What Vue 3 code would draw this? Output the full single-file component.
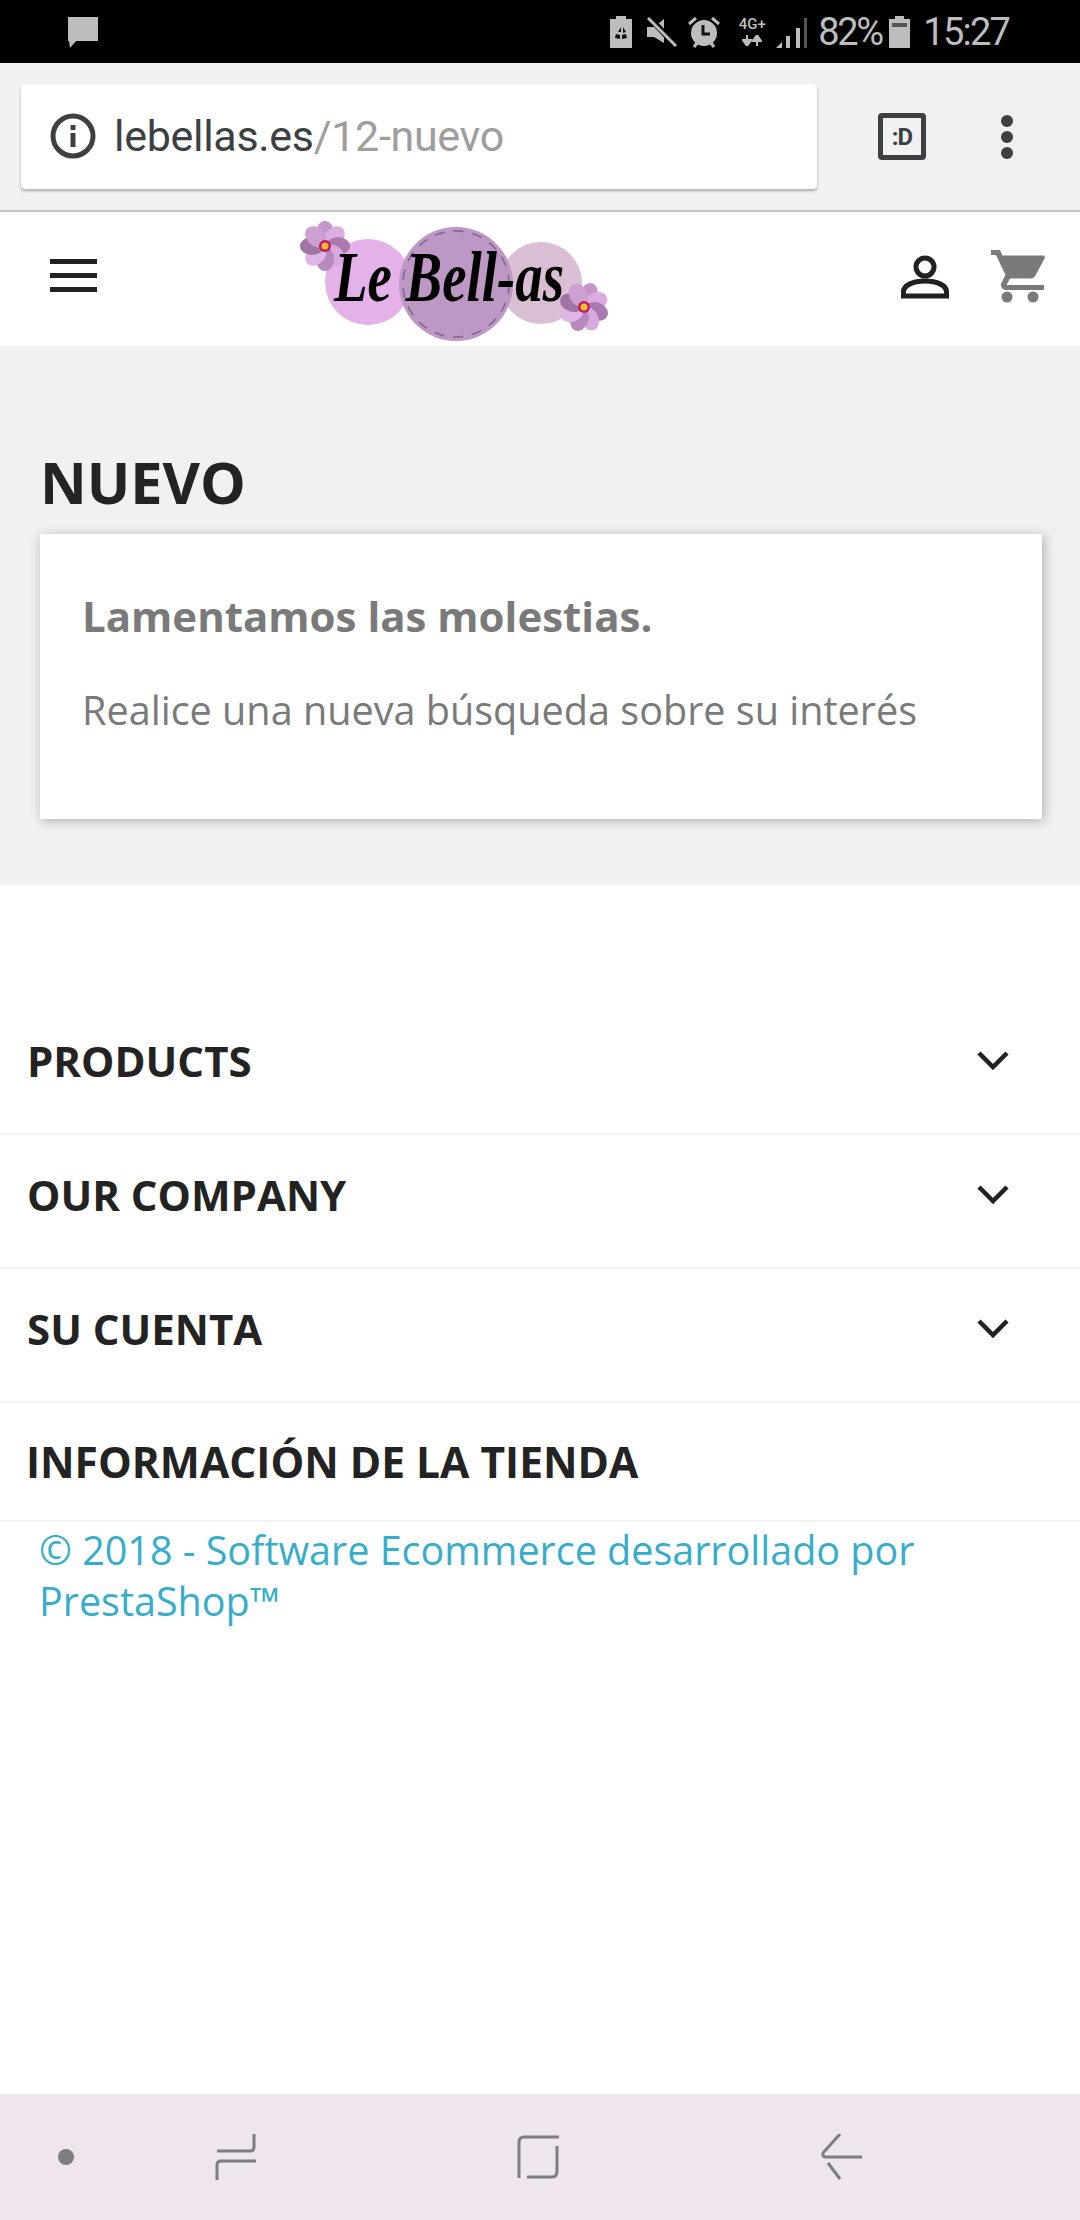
<template>
  <div class="page">
    <div class="status">
      <svg class="msg" width="32" height="32" viewBox="0 0 32 32"><path d="M1 1h30v24H9l-6 7-1-7H1z" fill="#bdbdbd"/></svg>
      <div class="status-right">
        <svg class="ic" width="22" height="32" viewBox="0 0 22 32"><path d="M6 0h10v3h6v29H0V3h6z" fill="#bdbdbd"/><path d="M11 11l-3 5 3 0zM13 11l3 5-3 1zM6 18l-1 4 5 1v-4zM16 18l1 4-5 1v-4z" fill="#111"/></svg>
        <svg class="ic gap-mute" width="30" height="30" viewBox="0 0 30 30"><path d="M0 10h7l10-8v24l-10-6H0z" fill="#bdbdbd"/><path d="M2 0l27 29" stroke="#000" stroke-width="6"/><path d="M1 1l28 28" stroke="#bdbdbd" stroke-width="3"/></svg>
        <svg class="ic gap-alarm" width="32" height="32" viewBox="0 0 32 32"><circle cx="16" cy="17" r="13" fill="#bdbdbd"/><path d="M1 8l7-6M31 8l-7-6M6 31l3-4M26 31l-3-4" stroke="#bdbdbd" stroke-width="3"/><path d="M15 9v9h7" stroke="#111" stroke-width="3" fill="none"/></svg>
        <div class="net">
          <span>4G+</span>
          <svg width="20" height="11" viewBox="0 0 20 11"><path d="M5 0v6M1 5l4 6 4-6zM15 11V5M11 6l4-6 4 6z" stroke="#bdbdbd" stroke-width="2" fill="#bdbdbd"/></svg>
        </div>
        <svg class="ic gap-signal" width="32" height="32" viewBox="0 0 32 32"><path d="M0 32l6-6v6z" fill="#bdbdbd"/><path d="M10 32V20h4v12zM20 32V12h4v20z" fill="#bdbdbd"/><path d="M28 32V2h3v30z" fill="#555"/></svg>
        <span class="st-text pct">82%</span>
        <svg class="ic gap-bat" width="21" height="32" viewBox="0 0 21 32"><path d="M6 0h9v3h6v29H0V3h6z" fill="#bdbdbd"/><rect x="3" y="7" width="15" height="4" fill="#555"/></svg>
        <span class="st-text time">15:27</span>
      </div>
    </div>

    <div class="toolbar">
      <div class="urlbox">
        <svg class="info" width="46" height="46" viewBox="0 0 46 46"><circle cx="23" cy="23" r="20" fill="none" stroke="#3c4043" stroke-width="5"/><rect x="20.500" y="20" width="5" height="14" fill="#3c4043"/><rect x="20.500" y="12" width="5" height="5" fill="#3c4043"/></svg>
        <span class="url"><span class="dom">lebellas.es</span><span class="path">/12-nuevo</span></span>
      </div>
      <div class="tab"><span>:D</span></div>
      <div class="dots"><i></i><i></i><i></i></div>
    </div>

    <header class="head">
      <div class="burger"><i></i><i></i><i></i></div>
      <svg class="logo" width="350" height="130" viewBox="0 0 350 130">
        <circle cx="77" cy="69" r="43" fill="#e4b1e8"/>
        <circle cx="250" cy="70" r="41" fill="#dabed4"/>
        <circle cx="165" cy="71" r="57" fill="#bd98c5"/>
        <circle cx="165" cy="71" r="53" fill="none" stroke="#7f6487" stroke-width="1.500" stroke-dasharray="10 9"/>
        <g transform="translate(34 33)">
          <ellipse v-for="(a, i) in petals" :key="a" cx="0" cy="-13" rx="9" ry="12" :transform="`rotate(${a})`" :fill="petalColors[i]"/>
          <circle r="6" fill="#c2186b"/><circle r="3.500" fill="#f0c020"/>
        </g>
        <text x="43" y="88" class="logotext" textLength="230" lengthAdjust="spacingAndGlyphs">Le Bell-as</text>
        <g transform="translate(293 94)">
          <ellipse v-for="(a, i) in petals" :key="a" cx="0" cy="-13" rx="9" ry="12" :transform="`rotate(${a + 20})`" :fill="petalColors[i]"/>
          <circle r="6" fill="#c2186b"/><circle r="3.500" fill="#f0c020"/>
        </g>
      </svg>
      <svg class="person" width="48" height="44" viewBox="0 0 48 44"><circle cx="24" cy="12" r="9" fill="none" stroke="#212121" stroke-width="5"/><path d="M2.500 41v-4c0-7 10-11 21.500-11s21.500 4 21.500 11v4z" fill="none" stroke="#212121" stroke-width="5"/></svg>
      <svg class="cart" width="54" height="54" viewBox="0 0 54 54"><path d="M0 0h9l2.500 5.500H53l1 2-9.500 18c-1 2-3 3-5 3H19l-3 5.500v1h37v5H15c-3 0-5-2.500-5-5 0-1 .3-2 .7-2.700L14.500 25 5 5H0z" fill="#7a7a7a"/><circle cx="16" cy="47" r="5.500" fill="#7a7a7a"/><circle cx="42" cy="47" r="5.500" fill="#7a7a7a"/></svg>
    </header>

    <main class="main">
      <h1>NUEVO</h1>
      <section class="card">
        <h2>Lamentamos las molestias.</h2>
        <p>Realice una nueva búsqueda sobre su interés</p>
      </section>
    </main>

    <footer class="foot">
      <div v-for="r in rows" :key="r" class="row">
        <span>{{ r }}</span>
        <svg width="34" height="22" viewBox="0 0 34 22"><path d="M3 3l14 14L31 3" fill="none" stroke="#212121" stroke-width="4.500"/></svg>
      </div>
      <div class="row last"><span>INFORMACIÓN DE LA TIENDA</span></div>
      <a class="copy">© 2018 - Software Ecommerce desarrollado por PrestaShop™</a>
    </footer>

    <nav class="nav">
      <span class="navdot"></span>
      <svg width="42" height="48" viewBox="0 0 42 48"><path d="M39 1v13q0 4-4 4H2M41 28H6q-4 0-4 4v15" fill="none" stroke="#7d7d7f" stroke-width="3"/></svg>
      <svg width="42" height="46" viewBox="0 0 42 46"><path d="M42 3H7Q2 3 2 8v36M40 12v25q0 6-5 6H10" fill="none" stroke="#7d7d7f" stroke-width="3"/></svg>
      <svg width="42" height="46" viewBox="0 0 42 46"><path d="M19 0L2 19q-1 4 3 4H41M7 29L19 45" fill="none" stroke="#7d7d7f" stroke-width="3"/></svg>
    </nav>
  </div>
</template>

<script setup>
const petals = [0, 45, 90, 135, 180, 225, 270, 315]
const petalColors = ['#c594cb', '#dcaee0', '#a87aae', '#d8a9dc', '#b98abd', '#e0b6e4', '#9f75a6', '#cda0d2']
const rows = ['PRODUCTS', 'OUR COMPANY', 'SU CUENTA']
</script>

<style>
html, body { margin: 0; background: #fff; }
</style>

<style scoped>
.page { width: 1080px; height: 2220px; display: flex; flex-direction: column; background: #fff; overflow: hidden; font-family: "Open Sans", sans-serif; }
.status { height: 63px; background: #000; display: flex; align-items: center; justify-content: space-between; padding: 0 71px 0 67px; box-sizing: border-box; flex: none; }
.msg { margin-top: 1px; }
.status-right { display: flex; align-items: center; }
.gap-mute { margin-left: 15px; }
.gap-alarm { margin-left: 11px; }
.net { margin-left: 16px; width: 32px; display: flex; flex-direction: column; align-items: center; gap: 3px; color: #bdbdbd; font: 500 15px/15px Roboto, sans-serif; }
.gap-signal { margin-left: 8px; }
.st-text { color: #bdbdbd; font-family: Roboto, sans-serif; font-size: 38px; line-height: 40px; letter-spacing: -1.800px; }
.pct { margin-left: 10px; width: 58px; white-space: nowrap; letter-spacing: -2.400px; }
.gap-bat { margin-left: 13px; }
.time { margin-left: 13px; white-space: nowrap; }

.toolbar { height: 149px; flex: none; box-sizing: border-box; background: #f1f1f1; border-bottom: 2px solid #c4c4c4; display: flex; align-items: center; padding: 0 0 0 21px; }
.urlbox { width: 796px; height: 105px; background: #fff; border-radius: 4px; box-shadow: 0 2px 3px rgba(0,0,0,.28); display: flex; align-items: center; padding-left: 29px; box-sizing: border-box; margin-top: -1px; }
.url { margin-left: 18px; font: 400 43px/50px Roboto, sans-serif; letter-spacing: -.3px; }
.dom { color: #3c4043; }
.path { color: #9e9e9e; }
.tab { margin-left: 61px; width: 48px; height: 47px; box-sizing: border-box; border: 5px solid #3c4043; border-radius: 4px; display: flex; align-items: center; justify-content: center; color: #3c4043; font: 700 24px/24px Roboto, sans-serif; letter-spacing: -1px; }
.dots { margin-left: 75px; display: flex; flex-direction: column; gap: 4px; }
.dots i { width: 12px; height: 12px; border-radius: 50%; background: #3c4043; display: block; }

.head { height: 134px; flex: none; display: flex; align-items: center; padding-left: 50px; box-sizing: border-box; }
.burger { display: flex; flex-direction: column; gap: 9px; margin-top: -7px; }
.burger i { width: 47px; height: 5px; background: #212121; display: block; }
.logo { margin-left: 194px; margin-top: -3px; flex: none; }
.logotext { font: italic 700 72px "Liberation Serif", serif; fill: #000; }
.person { margin-left: 260px; margin-top: -4px; flex: none; }
.cart { margin-left: 42px; margin-top: -5px; flex: none; }

.main { height: 539px; flex: none; box-sizing: border-box; background: #f1f1f1; padding: 101px 38px 0 40px; }
h1 { margin: 0 0 17px 0; font: 700 57.600px/70px "Open Sans", sans-serif; color: #232323; }
.card { height: 285px; box-sizing: border-box; background: #fff; box-shadow: 2px 2px 11px rgba(0,0,0,.28); padding: 54px 42px 0; }
h2 { margin: 0; font: 700 42px/56px "Open Sans", sans-serif; color: #7a7a7a; }
p { margin: 41px 0 0; font: 400 39.600px/50px "Open Sans", sans-serif; color: #7a7a7a; }

.foot { flex: 1; padding-top: 116px; box-sizing: border-box; }
.row { height: 134px; box-sizing: border-box; border-bottom: 2px solid #f1f1f1; display: flex; align-items: center; justify-content: space-between; padding: 0 70px 13px 27px; font: 700 42px/50px "Open Sans", sans-serif; color: #232323; }
.row.last { height: 119px; padding-bottom: 0; padding-left: 26px; font-size: 42.500px; }
.copy { display: block; padding: 0 39px; margin-top: 3px; font: 400 39.500px/51px "Open Sans", sans-serif; color: #36aecb; }

.nav { height: 126px; flex: none; background: #efe5ee; display: flex; align-items: center; }
.navdot { width: 16px; height: 16px; border-radius: 50%; background: #7d7d7f; margin-left: 58px; }
.nav svg:nth-of-type(1) { margin-left: 141px; }
.nav svg:nth-of-type(2) { margin-left: 260px; }
.nav svg:nth-of-type(3) { margin-left: 262px; }
</style>
